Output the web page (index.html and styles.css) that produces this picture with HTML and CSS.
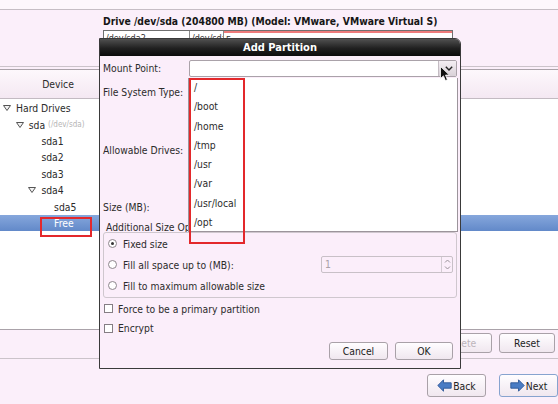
FILE: index.html
```html
<!DOCTYPE html>
<html>
<head>
<meta charset="utf-8">
<title>Add Partition</title>
<link rel="stylesheet" href="styles.css">
</head>
<body>
<div class="screen">
  <div class="topstrip"></div>
  <div class="drive">
    <div class="drive-title">Drive /dev/sda (204800 MB) (Model: VMware, VMware Virtual S)</div>
    <div class="pbar">
      <div class="seg s1">/dev/sda2</div>
      <div class="seg s2">/dev/sda</div>
      <div class="seg s3">Free</div>
    </div>
  </div>
  <div class="tree">
    <div class="tree-head"><div class="col-device">Device</div><div class="col-rest"></div></div>
    <div class="tree-body">
      <div class="row l0"><span class="exp"><svg width="8" height="6" viewBox="0 0 8 6"><polygon points="0.5,0.5 7.5,0.5 4,5.5" fill="#f4f4f4" stroke="#555" stroke-width="1"/></svg></span>Hard Drives</div>
      <div class="row l1"><span class="exp"><svg width="8" height="6" viewBox="0 0 8 6"><polygon points="0.5,0.5 7.5,0.5 4,5.5" fill="#f4f4f4" stroke="#555" stroke-width="1"/></svg></span>sda <span class="dim">(/dev/sda)</span></div>
      <div class="row l2"><span class="exp"></span>sda1</div>
      <div class="row l2"><span class="exp"></span>sda2</div>
      <div class="row l2"><span class="exp"></span>sda3</div>
      <div class="row l2"><span class="exp"><svg width="8" height="6" viewBox="0 0 8 6"><polygon points="0.5,0.5 7.5,0.5 4,5.5" fill="#f4f4f4" stroke="#555" stroke-width="1"/></svg></span>sda4</div>
      <div class="row l3"><span class="exp"></span>sda5</div>
      <div class="row l3 sel"><span class="exp"></span>Free</div>
    </div>
  </div>
  <div class="actions">
    <div class="btn w-create">Create</div>
    <div class="btn w-edit">Edit</div>
    <div class="btn w-delete disabled">Delete</div>
    <div class="btn w-reset">Reset</div>
  </div>
  <div class="nav">
    <div class="btn big w-back">
      <svg width="15" height="13" viewBox="0 0 15 13"><path d="M0.8 6.5 L6.5 0.8 L6.5 3.8 L14.2 3.8 L14.2 9.2 L6.5 9.2 L6.5 12.2 Z" fill="#4a7cc4" stroke="#2c5796" stroke-width="0.9" stroke-linejoin="round"/></svg>
      <span>Back</span>
    </div>
    <div class="btn big w-next next">
      <svg width="15" height="13" viewBox="0 0 15 13"><path d="M14.2 6.5 L8.5 0.8 L8.5 3.8 L0.8 3.8 L0.8 9.2 L8.5 9.2 L8.5 12.2 Z" fill="#4a7cc4" stroke="#2c5796" stroke-width="0.9" stroke-linejoin="round"/></svg>
      <span>Next</span>
    </div>
  </div>
</div>

<div class="dialog">
  <div class="dlg-title">Add Partition</div>
  <div class="dlg-body">
    <div class="form">
      <div class="lbl">Mount Point:</div>
      <div class="combo">
        <div class="combo-field"></div>
        <div class="combo-btn"><svg width="8" height="5" viewBox="0 0 8 5"><path d="M0.8 0.8 L4 4 L7.2 0.8" fill="none" stroke="#222" stroke-width="1.4"/></svg></div>
      </div>
      <div class="lbl">File System Type:</div>
      <div></div>
      <div class="lbl">Allowable Drives:</div>
      <div></div>
      <div class="lbl">Size (MB):</div>
      <div></div>
    </div>
    <div class="frame-label">Additional Size Options</div>
    <div class="frame">
      <div class="opt"><span class="radio on"></span>Fixed size</div>
      <div class="opt"><span class="radio"></span>Fill all space up to (MB):
        <div class="spin"><span class="spin-val">1</span><span class="spin-btns"><svg width="7" height="13" viewBox="0 0 7 13"><path d="M1 4.5 L3.5 2 L6 4.5" fill="none" stroke="#9a9299" stroke-width="1"/><path d="M1 8.5 L3.5 11 L6 8.5" fill="none" stroke="#9a9299" stroke-width="1"/></svg></span></div>
      </div>
      <div class="opt"><span class="radio"></span>Fill to maximum allowable size</div>
    </div>
    <div class="checks">
      <div class="chk"><span class="box"></span>Force to be a primary partition</div>
      <div class="chk"><span class="box"></span>Encrypt</div>
    </div>
    <div class="dlg-buttons">
      <div class="btn dbtn w-cancel">Cancel</div>
      <div class="btn dbtn w-ok">OK</div>
    </div>
  </div>
  <div class="popup">
    <div class="item">/</div>
    <div class="item">/boot</div>
    <div class="item">/home</div>
    <div class="item">/tmp</div>
    <div class="item">/usr</div>
    <div class="item">/var</div>
    <div class="item">/usr/local</div>
    <div class="item">/opt</div>
  </div>
</div>

<div class="mark mark-list"></div>
<div class="mark mark-free"></div>
<svg class="cursor" width="11" height="16" viewBox="0 0 11 16"><path d="M0.5 0.5 L0.5 12.5 L3.4 9.8 L5.4 14.6 L7.4 13.7 L5.5 9.1 L9.4 9.1 Z" fill="#111" stroke="#fff" stroke-width="0.8" stroke-linejoin="round"/></svg>
</body>
</html>
```

FILE: styles.css
```css
* { box-sizing: border-box; }
html, body { margin: 0; padding: 0; }
body {
  width: 558px;
  height: 404px;
  overflow: hidden;
  position: relative;
  background: #fbeffa;
  font-family: "DejaVu Sans Condensed", "DejaVu Sans", sans-serif;
  font-size: 10.3px;
  color: #2b2b2b;
}
.screen { display: flex; flex-direction: column; height: 404px; }

.topstrip { flex: none; height: 10px; background: #fdf7fc; border-bottom: 1px solid #c6bec5; }

.drive { flex: none; height: 57px; padding: 5px 0 0 103px; border-bottom: 1px solid #cbc3ca; }
.drive-title { font-weight: bold; line-height: 12px; height: 12px; white-space: nowrap; color: #161616; }
.pbar { margin-top: 3px; width: 350px; height: 30px; display: flex; border: 1px solid #707070; background: #fff; }
.seg { border-right: 1px solid #8a8a8a; padding: 1px 2px; line-height: 12px; font-size: 9px; overflow: hidden; white-space: nowrap; color: #333; }
.s1 { width: 86px; }
.s2 { width: 34px; }
.s3 { flex: 1; border-right: none; border-top: 2px solid #ee7b7b; }

.tree { flex: none; margin-top: 2px; border-top: 1px solid #aaa2a9; border-bottom: 1px solid #aaa2a9; display: flex; flex-direction: column; height: 261px; }
.tree-head { flex: none; height: 29px; display: flex; border-bottom: 1px solid #c3bbc2; background: linear-gradient(#fdf8fc, #f4e8f2); }
.col-device { width: 117px; text-align: center; line-height: 28px; border-right: 1px solid #dad2d8; color: #2b2b2b; }
.col-rest { flex: 1; }
.tree-body { flex: 1; background: #fff; padding-top: 1px; }
.row { height: 16.4px; display: flex; align-items: center; white-space: nowrap; }
.row.sel { background: linear-gradient(#86a7dc, #6289c9); color: #fff; }
.exp { flex: none; width: 13px; display: flex; align-items: center; }
.exp svg { display: block; }
.l0 { padding-left: 3px; }
.l1 { padding-left: 15.7px; }
.l2 { padding-left: 28.4px; }
.l3 { padding-left: 41.1px; }
.dim { font-size: 8px; color: #b5b5b5; margin-left: 3px; }

.actions { flex: none; height: 29px; display: flex; justify-content: flex-end; gap: 7px; padding: 3px 3px 0 0; border-bottom: 1px solid #cbc3ca; }
.nav { flex: 1; display: flex; justify-content: flex-end; gap: 13px; padding-top: 15px; }

.btn {
  height: 20px;
  border: 1px solid #a9a1a8;
  border-radius: 3px;
  background: linear-gradient(#fffdff, #f0e7ef);
  display: flex;
  align-items: center;
  justify-content: center;
  color: #222;
  white-space: nowrap;
}
.btn.disabled { color: #bcb4bb; }
.btn.big { height: 23px; gap: 1px; }
.btn.next { border-color: #87a3cf; }
.w-create { width: 60px; }
.w-edit { width: 50px; }
.w-delete { width: 62px; }
.w-reset { width: 56px; }
.w-back { width: 59px; }
.w-next { width: 59px; }

.dialog {
  position: absolute;
  left: 99px;
  top: 38px;
  width: 362px;
  height: 331px;
  border: 1px solid #3a3a3a;
  border-radius: 0 6px 0 0;
  background: #fbeefa;
  display: flex;
  flex-direction: column;
}
.dlg-title {
  flex: none;
  height: 17px;
  line-height: 17px;
  text-align: center;
  color: #fff;
  font-weight: bold;
  font-size: 11px;
  background: linear-gradient(#505050, #202020 55%, #0c0c0c);
  border-radius: 0 5px 0 0;
}
.dlg-body { flex: 1; display: flex; flex-direction: column; padding: 2px 3px 0 3px; }
.form { display: grid; grid-template-columns: 86px 1fr; grid-template-rows: 20px 28px 88px 26px; align-items: center; }
.lbl { white-space: nowrap; }
.combo { height: 17px; display: flex; border: 1px solid #aaa2a9; border-radius: 2px; background: #fff; overflow: hidden; }
.combo-field { flex: 1; }
.combo-btn { width: 18px; border-left: 1px solid #c4bcc3; background: linear-gradient(#f4eef3, #d9d1d8); display: flex; align-items: center; justify-content: center; padding-left: 3px; }

.frame-label { line-height: 12px; height: 12px; margin-top: 1px; margin-bottom: -1px; padding-left: 3px; white-space: nowrap; }
.frame { height: 66px; border: 1px solid #cfc7ce; border-radius: 3px; }
.opt { height: 21px; display: flex; align-items: center; padding-left: 4px; white-space: nowrap; }
.radio { width: 9px; height: 9px; border: 1px solid #8e868d; border-radius: 50%; background: #fff; margin-right: 6px; display: flex; align-items: center; justify-content: center; flex: none; }
.radio.on::after { content: ""; width: 3px; height: 3px; border-radius: 50%; background: #333; }
.spin { margin-left: auto; margin-right: 3px; width: 132px; height: 17px; border: 1px solid #c8c0c7; border-radius: 2px; display: flex; background: #fbeefa; }
.spin-val { flex: 1; color: #a9a1a8; padding-left: 3px; line-height: 15px; }
.spin-btns { width: 11px; border-left: 1px solid #d3cbd2; display: flex; align-items: center; justify-content: center; }

.checks { margin-top: 1px; }
.chk { height: 19.5px; display: flex; align-items: center; padding-left: 1px; white-space: nowrap; }
.box { width: 9px; height: 9px; border: 1px solid #857d84; background: #fff; margin-right: 5px; flex: none; }

.dlg-buttons { margin-top: 4px; display: flex; justify-content: flex-end; gap: 7px; padding-right: 4px; }
.dbtn { height: 18px; }
.w-cancel { width: 59px; }
.w-ok { width: 58px; }

.popup {
  position: absolute;
  left: 88px;
  top: 39px;
  width: 270px;
  height: 154px;
  background: #fff;
  border: 1px solid #9c949b;
  border-top: none;
}
.item { height: 19.25px; line-height: 19.25px; padding-left: 5px; color: #2b2b2b; }

.mark { position: absolute; border: 2px solid #e3282b; }
.mark-list { left: 189px; top: 78px; width: 56px; height: 166px; }
.mark-free { left: 40px; top: 217px; width: 52px; height: 20px; }
.cursor { position: absolute; left: 440px; top: 66px; }
```
